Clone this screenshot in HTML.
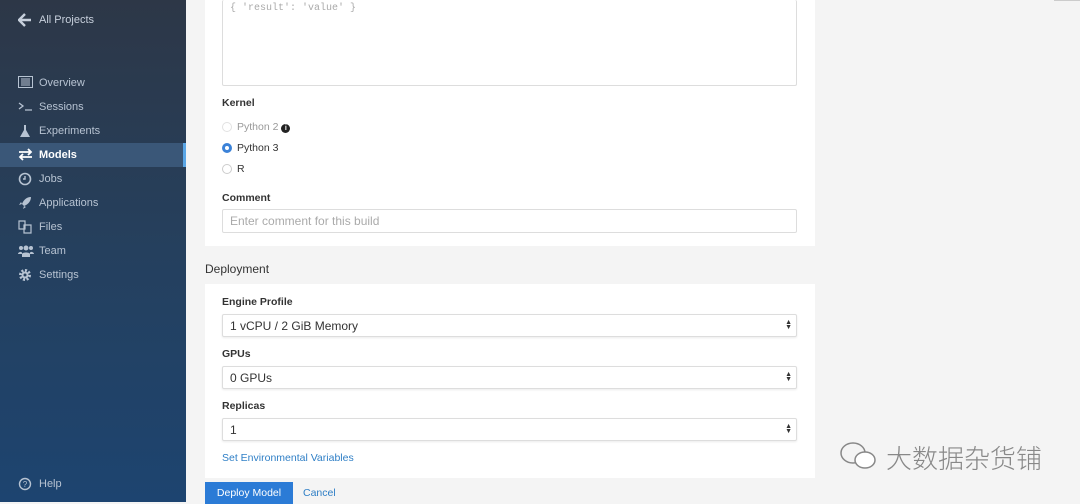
<!DOCTYPE html>
<html><head><style>
*{box-sizing:border-box;margin:0;padding:0}
body{width:1080px;height:502px;overflow:hidden;background:#f4f4f4;font-family:"Liberation Sans",sans-serif;position:relative}
.side{position:absolute;left:0;top:0;width:186px;height:502px;background:linear-gradient(180deg,#2d3747 0%,#25405e 50%,#1d4470 100%)}
.nav{position:absolute;left:0;width:186px;height:24px;color:#b7c3d2;font-size:11px;line-height:24px;padding-left:39px}
.nav svg{position:absolute;left:18px;top:5px}
.act{background:#3a5778;color:#fff;font-weight:bold}
.ind{position:absolute;left:183px;top:143px;width:3px;height:24px;background:#5aa6e6}
.card{position:absolute;left:205px;width:610px;background:#fff}
.lbl{position:absolute;left:222px;font-size:10.5px;font-weight:bold;color:#333}
.inp{position:absolute;left:222px;width:575px;border:1px solid #ddd;border-radius:2px;background:#fff;font-size:12px;color:#333;padding-left:7px}
.sel{height:23px;line-height:22px;box-shadow:0 1px 2px rgba(0,0,0,.08)}
.arr{position:absolute;right:4px;top:5px;font-size:7px;line-height:5px;color:#333}
.rad{position:absolute;left:222px;width:10px;height:10px;border-radius:50%;border:1px solid #ccc;background:#fff}
.rt{position:absolute;left:237px;font-size:10.5px;color:#333}
</style></head><body>
<div class="side">
 <div class="nav" style="top:8px;color:#c7d0dc"><svg width="14" height="14" viewBox="0 0 14 14"><path d="M7 1L1 7l6 6M1 7h12" stroke="#c7d0dc" stroke-width="2.4" fill="none"/></svg>All Projects</div>
 <div class="nav" style="top:71px"><svg width="15" height="12" viewBox="0 0 15 12"><rect x="0.5" y="0.5" width="14" height="11" fill="none" stroke="#b7c3d2"/><path d="M3 3h9M3 5h9M3 7h9M3 9h9" stroke="#b7c3d2"/></svg>Overview</div>
 <div class="nav" style="top:95px"><svg width="15" height="12" viewBox="0 0 15 12"><path d="M1 3l4 3-4 3M7 10h7" stroke="#b7c3d2" stroke-width="1.3" fill="none"/></svg>Sessions</div>
 <div class="nav" style="top:119px"><svg width="14" height="14" viewBox="0 0 14 14"><path d="M5 1h4M6 1v5L2 13h10L8 6V1" fill="#b7c3d2"/></svg>Experiments</div>
 <div class="nav act" style="top:143px"><svg width="15" height="13" viewBox="0 0 15 13"><path d="M1 4h12M10 1l3 3-3 3M14 9H2M5 6l-3 3 3 3" stroke="#fff" stroke-width="1.8" fill="none"/></svg>Models</div>
 <div class="nav" style="top:167px"><svg width="14" height="14" viewBox="0 0 14 14"><circle cx="7" cy="7" r="5.5" fill="none" stroke="#b7c3d2" stroke-width="1.6"/><path d="M7 4v3H5" stroke="#b7c3d2" stroke-width="1.4" fill="none"/></svg>Jobs</div>
 <div class="nav" style="top:191px"><svg width="14" height="14" viewBox="0 0 14 14"><path d="M13 1C8 1 5 5 4 8l2 2c3-1 7-4 7-9zM4 8L1 9l2-3zM6 10l-1 3 3-2zM3 11l-2 2" fill="#b7c3d2"/></svg>Applications</div>
 <div class="nav" style="top:215px"><svg width="14" height="14" viewBox="0 0 14 14"><path d="M1 1h6v8H1zM6 5h7v8H6z" fill="none" stroke="#b7c3d2" stroke-width="1.2"/></svg>Files</div>
 <div class="nav" style="top:239px"><svg width="16" height="14" viewBox="0 0 16 14"><circle cx="8" cy="4" r="2.5" fill="#b7c3d2"/><circle cx="3" cy="4" r="2" fill="#b7c3d2"/><circle cx="13" cy="4" r="2" fill="#b7c3d2"/><path d="M4 13v-3c0-2 8-2 8 0v3zM0 10c0-2 4-3 4-1v1zM16 10c0-2-4-3-4-1v1z" fill="#b7c3d2"/></svg>Team</div>
 <div class="nav" style="top:263px"><svg width="14" height="14" viewBox="0 0 14 14"><circle cx="7" cy="7" r="4.5" fill="none" stroke="#b7c3d2" stroke-width="3" stroke-dasharray="2 1.5"/><circle cx="7" cy="7" r="3.5" fill="#b7c3d2"/><circle cx="7" cy="7" r="1.5" fill="#27405c"/></svg>Settings</div>
 <div class="nav" style="top:472px"><svg width="14" height="14" viewBox="0 0 14 14"><circle cx="7" cy="7" r="5.5" fill="none" stroke="#b7c3d2" stroke-width="1.4"/><text x="7" y="10" font-size="8" text-anchor="middle" fill="#b7c3d2" font-family="Liberation Sans">?</text></svg>Help</div>
</div>
<div class="ind"></div>
<div style="position:absolute;left:1054px;top:0;width:26px;height:1px;background:#ccc"></div>

<div class="card" style="top:0;height:246px"></div>
<div class="inp" style="top:0;height:86px;border-top:none;font-family:'Liberation Mono',monospace;font-size:10px;color:#aaa;padding-top:3px">{ 'result': 'value' }</div>
<div class="lbl" style="top:97px">Kernel</div>
<div class="rad" style="top:122px;border-color:#e2e2e2"></div><div class="rt" style="top:121px;color:#999">Python 2 <span style="display:inline-block;width:9px;height:9px;border-radius:50%;background:#222;color:#fff;font-size:7px;line-height:9px;text-align:center;font-weight:bold">i</span></div>
<div class="rad" style="top:143px;border:3px solid #3b82d8"></div><div class="rt" style="top:142px">Python 3</div>
<div class="rad" style="top:164px"></div><div class="rt" style="top:163px">R</div>
<div class="lbl" style="top:192px">Comment</div>
<div class="inp" style="top:209px;height:24px;line-height:22px;color:#aaa">Enter comment for this build</div>

<div style="position:absolute;left:205px;top:262px;font-size:12px;color:#333">Deployment</div>
<div class="card" style="top:284px;height:194px"></div>
<div class="lbl" style="top:296px">Engine Profile</div>
<div class="inp sel" style="top:314px">1 vCPU / 2 GiB Memory<div class="arr">▲<br>▼</div></div>
<div class="lbl" style="top:348px">GPUs</div>
<div class="inp sel" style="top:366px">0 GPUs<div class="arr">▲<br>▼</div></div>
<div class="lbl" style="top:400px">Replicas</div>
<div class="inp sel" style="top:418px">1<div class="arr">▲<br>▼</div></div>
<div style="position:absolute;left:222px;top:452px;font-size:10.5px;color:#2f7fc6">Set Environmental Variables</div>
<div style="position:absolute;left:205px;top:482px;width:88px;height:22px;background:#2b7bd6;color:#fff;font-size:10.5px;text-align:center;line-height:22px">Deploy Model</div>
<div style="position:absolute;left:303px;top:487px;font-size:10.5px;color:#2f7fc6">Cancel</div>

<svg style="position:absolute;left:838px;top:440px" width="44" height="32" viewBox="0 0 44 32"><ellipse cx="15" cy="13" rx="12" ry="10" fill="none" stroke="#888" stroke-width="1.5"/><ellipse cx="27" cy="20" rx="10" ry="8" fill="#fff" stroke="#888" stroke-width="1.5"/></svg>
<div style="position:absolute;left:886px;top:439px;font-family:'Liberation Sans','Noto Sans CJK SC',sans-serif;font-size:26px;font-weight:300;color:#888">大数据杂货铺</div>
</body></html>
